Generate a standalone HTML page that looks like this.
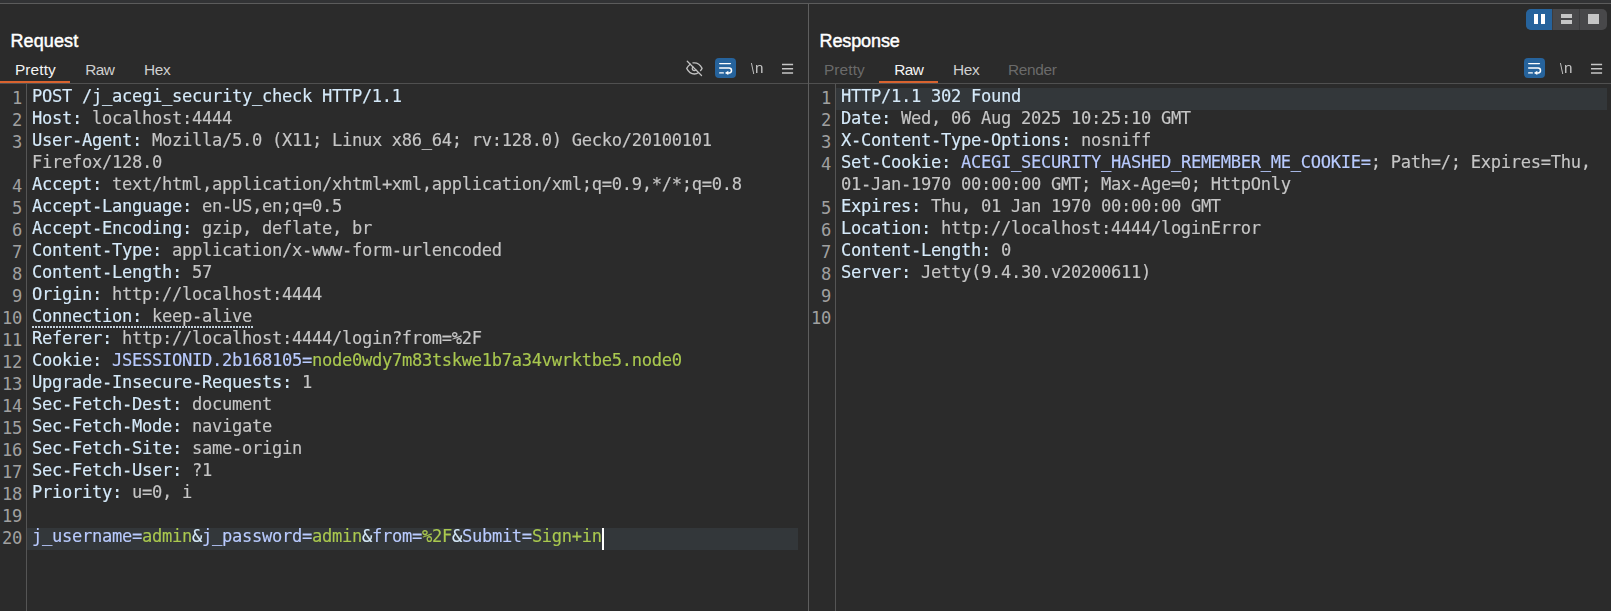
<!DOCTYPE html>
<html lang="en"><head><meta charset="utf-8"><title>Repeater</title>
<style>
html,body{margin:0;padding:0;}
body{width:1611px;height:611px;overflow:hidden;background:#2b2b2b;position:relative;font-family:"Liberation Sans",Arial,sans-serif;color:#fff;}
.topstrip{position:absolute;left:0;top:0;width:1611px;height:3px;background:#323335;}
.topline{position:absolute;left:0;top:3px;width:1611px;height:1px;background:#5c5c5c;}
.vdiv{position:absolute;left:808px;top:4px;width:1px;height:607px;background:#5e5e5e;}
.pane{position:absolute;top:4px;height:607px;overflow:hidden;}
#req{left:0;width:808px;}
#res{left:809px;width:802px;}
.title{position:absolute;left:10.5px;top:25.4px;font-size:18px;font-weight:normal;-webkit-text-stroke:0.45px #fff;color:#fff;line-height:24px;white-space:nowrap;}
.tabs{position:absolute;left:0;top:52px;height:27px;width:100%;border-bottom:1px solid #505050;}
.tab{position:absolute;top:0;height:25px;}
.tab span{position:absolute;top:0px;line-height:27px;font-size:15.4px;color:#cfcfcf;white-space:nowrap;}
.tab.sel{border-bottom:2px solid #d9632f;}
.tab.sel span{color:#f4f4f4;}
.tab.dis span{color:#6a6a6a;}
.ico{position:absolute;line-height:0;}
.nl{position:absolute;width:16px;height:26px;color:#c4c4c4;will-change:transform;}
.nl span{position:absolute;line-height:20px;}
.bs{font-size:15.4px;left:0.7px;top:3.0px;transform:scaleX(0.74);transform-origin:0 0;}
.nn{font-size:15.2px;left:5.1px;top:1.9px;}
.nums{position:absolute;left:0;top:83px;width:22px;font-family:"DejaVu Sans Mono","Liberation Mono",monospace;font-size:17.1px;letter-spacing:-0.2951px;line-height:22px;color:#a0a0a0;text-align:right;}
.nr{height:22px;}
.code{position:absolute;left:27px;top:84px;right:0;font-family:"DejaVu Sans Mono","Liberation Mono",monospace;font-size:17.1px;letter-spacing:-0.2951px;line-height:22px;will-change:transform;-webkit-text-stroke:0.14px;}
.row{position:relative;height:22px;white-space:pre;padding-left:5px;}
.row>span{position:relative;top:-3px;}
.row.hl{background:#33373a;}
#req .row.hl{width:766px;}
#res .row.hl{width:766px;}
.gut{position:absolute;left:26px;top:80px;width:1px;height:527px;background:#555;}
.h{color:#d5eafa;}
.v{color:#c6c6c6;}
.k{color:#b9cbff;}
.g{color:#a9c84f;}
.dotline{position:absolute;left:5px;top:18px;width:221px;height:2px;background-image:linear-gradient(90deg,#c3d0db 0,#c3d0db 2px,transparent 2px,transparent 3px);background-size:3px 2px;background-repeat:repeat-x;}
.cursor{position:absolute;left:602px;top:524px;width:2px;height:22px;background:#fff;}
.seg{position:absolute;left:1526px;top:9px;width:81px;height:21px;border-radius:5px;overflow:hidden;background:#48484a;}
.seg div{position:absolute;top:0;height:21px;}
</style></head>
<body>
<div class="topstrip"></div><div class="topline"></div>
<div class="pane" id="req">
  <div class="title" style="letter-spacing:0.1px;">Request</div>
  <div class="tabs">
    <div class="tab sel" style="left:0;width:70px;"><span style="left:15px;letter-spacing:0.1px;">Pretty</span></div>
    <div class="tab" style="left:70px;width:59px;"><span style="left:15.3px;letter-spacing:-0.65px;">Raw</span></div>
    <div class="tab" style="left:129px;width:56px;"><span style="left:15px;letter-spacing:-0.3px;">Hex</span></div>
  </div>
  <div class="ico" style="left:685.8px;top:55.8px;"><svg width="16.8" height="16.8" viewBox="0 0 24 24"><g fill="none" stroke="#c2c2c2" stroke-width="1.8" stroke-linecap="round" stroke-linejoin="round"><path d="M17.94 17.94A10.07 10.07 0 0 1 12 20c-7 0-11-8-11-8a18.45 18.45 0 0 1 5.06-5.94M9.9 4.24A9.12 9.12 0 0 1 12 4c7 0 11 8 11 8a18.5 18.5 0 0 1-2.16 3.19m-6.72-1.07a3 3 0 1 1-4.24-4.24"/><path d="M1.8 1.8L22.2 22.2"/></g></svg></div>
  <div class="ico" style="left:715px;top:54px;"><svg width="21" height="20" viewBox="0 0 21 20"><rect x="0" y="0" width="21" height="20" rx="4" fill="#26639c"/><g fill="none" stroke="#fff" stroke-width="1.4" stroke-linecap="round" stroke-linejoin="round"><path d="M4.7 5.6H15.4"/><path d="M4.7 10.1H14.1a2.4 2.4 0 0 1 0 4.8H12.6" stroke-width="1.5"/><path d="M4.7 14.9H8.3"/></g><path d="M9.9 14.9L13.3 12.7V17.1Z" fill="#fff"/></svg></div>
  <div class="nl" style="left:750px;top:52px;"><span class="bs">\</span><span class="nn">n</span></div>
  <div class="ico" style="left:782px;top:58.8px;"><svg width="12" height="12" viewBox="0 0 12 12"><g stroke="#c6c6c6" stroke-width="1.5"><path d="M0 1.4H11.1M0 5.75H11.1M0 10.1H11.1"/></g></svg></div>
  <div class="gut"></div>
  <div class="nums">
<div class="nr">1</div>
<div class="nr">2</div>
<div class="nr">3</div>
<div class="nr"></div>
<div class="nr">4</div>
<div class="nr">5</div>
<div class="nr">6</div>
<div class="nr">7</div>
<div class="nr">8</div>
<div class="nr">9</div>
<div class="nr">10</div>
<div class="nr">11</div>
<div class="nr">12</div>
<div class="nr">13</div>
<div class="nr">14</div>
<div class="nr">15</div>
<div class="nr">16</div>
<div class="nr">17</div>
<div class="nr">18</div>
<div class="nr">19</div>
<div class="nr">20</div>
  </div>
  <div class="code">
<div class="row"><span class="h">POST /j_acegi_security_check HTTP/1.1</span></div>
<div class="row"><span class="h">Host:</span><span class="v"> localhost:4444</span></div>
<div class="row"><span class="h">User-Agent:</span><span class="v"> Mozilla/5.0 (X11; Linux x86_64; rv:128.0) Gecko/20100101</span></div>
<div class="row"><span class="v">Firefox/128.0</span></div>
<div class="row"><span class="h">Accept:</span><span class="v"> text/html,application/xhtml+xml,application/xml;q=0.9,*/*;q=0.8</span></div>
<div class="row"><span class="h">Accept-Language:</span><span class="v"> en-US,en;q=0.5</span></div>
<div class="row"><span class="h">Accept-Encoding:</span><span class="v"> gzip, deflate, br</span></div>
<div class="row"><span class="h">Content-Type:</span><span class="v"> application/x-www-form-urlencoded</span></div>
<div class="row"><span class="h">Content-Length:</span><span class="v"> 57</span></div>
<div class="row"><span class="h">Origin:</span><span class="v"> http://localhost:4444</span></div>
<div class="row"><span class="h">Connection:</span><span class="v"> keep-alive</span><i class="dotline"></i></div>
<div class="row"><span class="h">Referer:</span><span class="v"> http://localhost:4444/login?from=%2F</span></div>
<div class="row"><span class="h">Cookie: </span><span class="k">JSESSIONID.2b168105=</span><span class="g">node0wdy7m83tskwe1b7a34vwrktbe5.node0</span></div>
<div class="row"><span class="h">Upgrade-Insecure-Requests:</span><span class="v"> 1</span></div>
<div class="row"><span class="h">Sec-Fetch-Dest:</span><span class="v"> document</span></div>
<div class="row"><span class="h">Sec-Fetch-Mode:</span><span class="v"> navigate</span></div>
<div class="row"><span class="h">Sec-Fetch-Site:</span><span class="v"> same-origin</span></div>
<div class="row"><span class="h">Sec-Fetch-User:</span><span class="v"> ?1</span></div>
<div class="row"><span class="h">Priority:</span><span class="v"> u=0, i</span></div>
<div class="row"></div>
<div class="row hl"><span class="k">j_username=</span><span class="g">admin</span><span class="h">&amp;</span><span class="k">j_password=</span><span class="g">admin</span><span class="h">&amp;</span><span class="k">from=</span><span class="g">%2F</span><span class="h">&amp;</span><span class="k">Submit=</span><span class="g">Sign+in</span></div>
  </div>
  <div class="cursor"></div>
</div>
<div class="vdiv"></div>
<div class="pane" id="res">
  <div class="title" style="letter-spacing:-0.1px;">Response</div>
  <div class="tabs">
    <div class="tab dis" style="left:0;width:70px;"><span style="left:15px;letter-spacing:0.1px;">Pretty</span></div>
    <div class="tab sel" style="left:70px;width:59px;"><span style="left:15.3px;letter-spacing:-0.65px;">Raw</span></div>
    <div class="tab" style="left:129px;width:56px;"><span style="left:15px;letter-spacing:-0.3px;">Hex</span></div>
    <div class="tab dis" style="left:185px;width:78px;"><span style="left:14px;letter-spacing:-0.3px;">Render</span></div>
  </div>
  <div class="ico" style="left:715px;top:54px;"><svg width="21" height="20" viewBox="0 0 21 20"><rect x="0" y="0" width="21" height="20" rx="4" fill="#26639c"/><g fill="none" stroke="#fff" stroke-width="1.4" stroke-linecap="round" stroke-linejoin="round"><path d="M4.7 5.6H15.4"/><path d="M4.7 10.1H14.1a2.4 2.4 0 0 1 0 4.8H12.6" stroke-width="1.5"/><path d="M4.7 14.9H8.3"/></g><path d="M9.9 14.9L13.3 12.7V17.1Z" fill="#fff"/></svg></div>
  <div class="nl" style="left:750px;top:52px;"><span class="bs">\</span><span class="nn">n</span></div>
  <div class="ico" style="left:782px;top:58.8px;"><svg width="12" height="12" viewBox="0 0 12 12"><g stroke="#c6c6c6" stroke-width="1.5"><path d="M0 1.4H11.1M0 5.75H11.1M0 10.1H11.1"/></g></svg></div>
  <div class="gut"></div>
  <div class="nums">
<div class="nr">1</div>
<div class="nr">2</div>
<div class="nr">3</div>
<div class="nr">4</div>
<div class="nr"></div>
<div class="nr">5</div>
<div class="nr">6</div>
<div class="nr">7</div>
<div class="nr">8</div>
<div class="nr">9</div>
<div class="nr">10</div>
  </div>
  <div class="code">
<div class="row hl"><span class="h">HTTP/1.1 302 Found</span></div>
<div class="row"><span class="h">Date:</span><span class="v"> Wed, 06 Aug 2025 10:25:10 GMT</span></div>
<div class="row"><span class="h">X-Content-Type-Options:</span><span class="v"> nosniff</span></div>
<div class="row"><span class="h">Set-Cookie: </span><span class="k">ACEGI_SECURITY_HASHED_REMEMBER_ME_COOKIE=</span><span class="v">; Path=/; Expires=Thu,</span></div>
<div class="row"><span class="v">01-Jan-1970 00:00:00 GMT; Max-Age=0; HttpOnly</span></div>
<div class="row"><span class="h">Expires:</span><span class="v"> Thu, 01 Jan 1970 00:00:00 GMT</span></div>
<div class="row"><span class="h">Location:</span><span class="v"> http://localhost:4444/loginError</span></div>
<div class="row"><span class="h">Content-Length:</span><span class="v"> 0</span></div>
<div class="row"><span class="h">Server:</span><span class="v"> Jetty(9.4.30.v20200611)</span></div>
<div class="row"></div>
<div class="row"></div>
  </div>
</div>
<div class="seg">
  <div style="left:0;width:26px;background:#26639c;"></div>
  <div style="left:7.8px;top:5px;width:4.4px;height:10px;background:#fff;"></div>
  <div style="left:14.6px;top:5px;width:4.4px;height:10px;background:#fff;"></div>
  <div style="left:26px;width:1px;background:#3c3c3e;"></div>
  <div style="left:35px;top:5px;width:11px;height:4px;background:#c6c6c6;"></div>
  <div style="left:35px;top:11px;width:11px;height:4px;background:#c6c6c6;"></div>
  <div style="left:53px;width:1px;background:#3c3c3e;"></div>
  <div style="left:62px;top:5px;width:11px;height:10px;background:#c6c6c6;"></div>
</div>
</body></html>
